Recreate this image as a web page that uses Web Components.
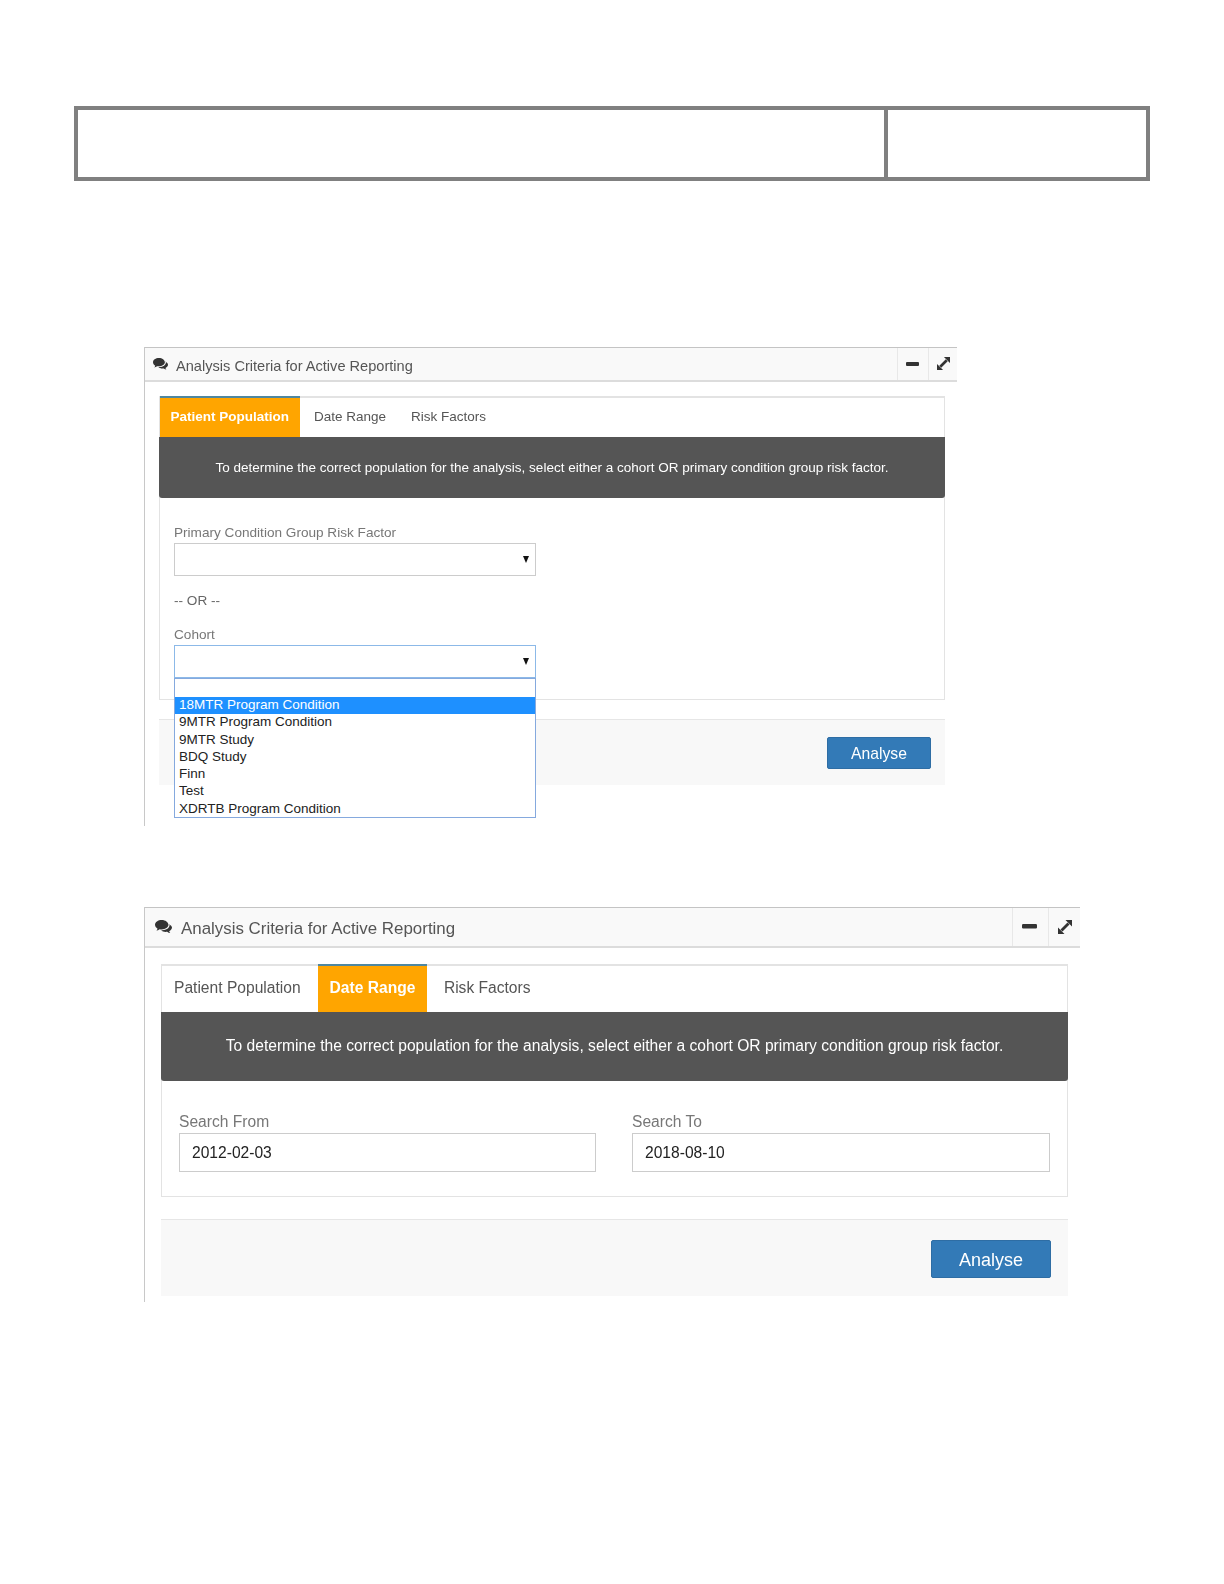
<!DOCTYPE html>
<html lang="en">
<head>
<meta charset="utf-8">
<title>Analysis Criteria</title>
<style>
    html, body { margin: 0; background: #fff; }
    body { font-family: "Liberation Sans", Arial, sans-serif; color: #333; }

    criteria-panel.small {
        --panel-width: 813px;
        --head-height: 35px;
        --head-font: 14.6px;
        --head-pad: 8px;
        --cell-a: 31px;
        --cell-b: 29px;
        --icon-w: 15px;
        --icon-gap: 8px;
        --dash-w: 13px;
        --arrows-w: 13px;
        --inner-top: 14px;
        --inner-left: 14px;
        --inner-width: 786px;
        --tab-height: 41px;
        --tab-font: 13.5px;
        --tab-pad-l: 12.5px;
        --tab-pad-r: 12.5px;
        --tab-active-pad: 10.5px;
        --tab-active-gap: 2px;
        --notice-height: 61px;
        --notice-pad: 0;
        --foot-gap: 19px;
        --foot-height: 66px;
        margin: 166px 0 0 144px;
        height: 479px;
    }
    criteria-panel.large {
        --panel-width: 936px;
        --head-height: 41px;
        --head-font: 16.900px;
        --head-pad: 10px;
        --cell-a: 36px;
        --cell-b: 32px;
        --icon-w: 17px;
        --icon-gap: 9px;
        --dash-w: 15px;
        --arrows-w: 14px;
        --inner-top: 16px;
        --inner-left: 16px;
        --inner-width: 907px;
        --tab-height: 48px;
        --tab-font: 15.600px;
        --tab-pad-l: 12px;
        --tab-pad-r: 17px;
        --tab-active-pad: 12px;
        --tab-active-gap: 4.5px;
        --notice-height: 69px;
        --notice-pad: 2px;
        --foot-gap: 22px;
        --foot-height: 77px;
        margin: 81px 0 0 144px;
        height: 395px;
    }
    .cols { display: grid; grid-template-columns: 417px 418px; column-gap: 36px; padding: 32px 17px 24px; }
    .rows { padding: 27px 14px 21px; }
    .or { font-size: 13.600px; line-height: 16px; color: #666; margin: 17px 0 18px; }
</style>
</head>
<body>

<blank-table></blank-table>

<criteria-panel class="small" heading="Analysis Criteria for Active Reporting">
    <tab-item slot="tabs" active>Patient Population</tab-item>
    <tab-item slot="tabs">Date Range</tab-item>
    <tab-item slot="tabs">Risk Factors</tab-item>
    <span slot="notice">To determine the correct population for the analysis, select either a cohort OR primary condition group risk factor.</span>
    <div class="rows" slot="body">
        <field-box label="Primary Condition Group Risk Factor"><select-box></select-box></field-box>
        <div class="or">-- OR --</div>
        <field-box label="Cohort">
            <select-box open>
                <drop-option selected>18MTR Program Condition</drop-option>
                <drop-option>9MTR Program Condition</drop-option>
                <drop-option>9MTR Study</drop-option>
                <drop-option>BDQ Study</drop-option>
                <drop-option>Finn</drop-option>
                <drop-option>Test</drop-option>
                <drop-option>XDRTB Program Condition</drop-option>
            </select-box>
        </field-box>
    </div>
    <action-button slot="action" style="--btn-w:104px;--btn-h:32px;--btn-font:15.700px;--btn-top:17px;--btn-right:14px">Analyse</action-button>
</criteria-panel>

<criteria-panel class="large" heading="Analysis Criteria for Active Reporting">
    <tab-item slot="tabs">Patient Population</tab-item>
    <tab-item slot="tabs" active>Date Range</tab-item>
    <tab-item slot="tabs">Risk Factors</tab-item>
    <span slot="notice">To determine the correct population for the analysis, select either a cohort OR primary condition group risk factor.</span>
    <div class="cols" slot="body">
        <field-box label="Search From" large><text-box value="2012-02-03"></text-box></field-box>
        <field-box label="Search To" large><text-box value="2018-08-10"></text-box></field-box>
    </div>
    <action-button slot="action" style="--btn-w:120px;--btn-h:38px;--btn-font:18px;--btn-top:20px;--btn-right:17px">Analyse</action-button>
</criteria-panel>

<script>
class BlankTable extends HTMLElement {
    constructor() {
        super();
        this.attachShadow({ mode: 'open' });
        this.shadowRoot.innerHTML = `
        <style>
            :host {
                display: grid;
                grid-template-columns: 806px 1fr;
                box-sizing: border-box;
                width: 1076px;
                height: 75px;
                margin: 106px 0 0 74px;
                border: 4px solid #808080;
            }
            div + div { border-left: 4px solid #808080; }
        </style>
        <div></div><div></div>
        `;
    }
}

class CriteriaPanel extends HTMLElement {
    constructor() {
        super();
        this.attachShadow({ mode: 'open' });
        this.shadowRoot.innerHTML = `
        <style>
            :host {
                display: block;
                box-sizing: border-box;
                width: var(--panel-width);
                border-left: 1px solid #c8c8c8;
                filter: blur(.3px);
            }
            header {
                display: flex;
                align-items: stretch;
                box-sizing: border-box;
                height: var(--head-height);
                background: #f9f9f9;
                border-top: 1px solid #c4c4c4;
                border-bottom: 2px solid #dcdcdc;
                font-size: var(--head-font);
                color: #555;
            }
            .title { flex: 1; display: flex; align-items: center; gap: var(--icon-gap); padding-left: var(--head-pad); }
            .title span { margin-top: 3px; }
            .title svg { width: var(--icon-w); flex: none; }
            .cell {
                display: flex;
                align-items: center;
                justify-content: center;
                border-left: 1px solid #e8e8e8;
                box-sizing: border-box;
            }
            .cell svg { margin-top: -1px; }
            .a { width: var(--cell-a); }
            .a svg { width: var(--dash-w); margin-right: 2px; }
            .b { width: var(--cell-b); }
            .b svg { width: var(--arrows-w); }
            .inner {
                width: var(--inner-width);
                margin: var(--inner-top) 0 0 var(--inner-left);
            }
            .box { border: 1px solid #e3e3e3; border-top-width: 2px; }
            nav { display: flex; height: calc(var(--tab-height) - 2px); }
            .notice {
                display: flex;
                align-items: center;
                justify-content: center;
                box-sizing: border-box;
                height: var(--notice-height);
                padding-bottom: var(--notice-pad);
                margin: 0 -1px;
                background: #555;
                border-radius: 0 0 3px 3px;
                color: #fff;
                font-size: var(--tab-font);
            }
            footer {
                display: flex;
                justify-content: flex-end;
                align-items: flex-start;
                box-sizing: border-box;
                height: var(--foot-height);
                margin-top: var(--foot-gap);
                background: #f8f8f8;
                border-top: 1px solid #e6e6e6;
            }
        </style>
        <header>
            <div class="title">
                <svg viewBox="0 0 24 20" fill="#333"><path d="M9.500 0C4.300 0 0 3 0 6.800c0 2.200 1.400 4.100 3.600 5.400-.3 1-.9 1.900-1.700 2.800 1.600-.2 3.300-.9 4.600-2 .9.200 1.900.3 3 .3 5.200 0 9.500-3 9.500-6.500S14.700 0 9.500 0z"/><path d="M20.300 5.700c.2.500.3 1 .3 1.500 0 4.300-4.600 7.300-10.200 7.300l-1.700-.1c1.400 1.500 3.700 2.400 6.300 2.400.8 0 1.500-.1 2.200-.2 1.200 1 2.700 1.700 4.400 1.900-.7-.8-1.300-1.700-1.600-2.700 2.400-1.200 4-3 4-5.100 0-2-1.700-3.700-4.500-4.500z"/></svg>
                <span id="heading"></span>
            </div>
            <div class="cell a"><svg viewBox="0 0 13 4"><rect width="13" height="4" rx="1" fill="#333"/></svg></div>
            <div class="cell b"><svg viewBox="0 0 14 14" fill="#333"><path d="M14 0v6.500L7.500 0zM0 14V7.500l6.500 6.500z"/><path d="M3.500 10.500l7-7" stroke="#333" stroke-width="2.800"/></svg></div>
        </header>
        <div class="inner">
            <div class="box">
                <nav><slot name="tabs"></slot></nav>
                <div class="notice"><slot name="notice"></slot></div>
                <slot name="body"></slot>
            </div>
            <footer><slot name="action"></slot></footer>
        </div>
        `;
    }

    connectedCallback() {
        this.shadowRoot.querySelector('#heading').textContent = this.getAttribute('heading');
    }
}

class TabItem extends HTMLElement {
    constructor() {
        super();
        this.attachShadow({ mode: 'open' });
        this.shadowRoot.innerHTML = `
        <style>
            :host {
                display: flex;
                align-items: center;
                box-sizing: border-box;
                padding: 0 var(--tab-pad-r) 2px var(--tab-pad-l);
                font-size: var(--tab-font);
                color: #555;
            }
            :host([active]) {
                margin: -2px var(--tab-active-gap) 0 0;
                padding: 0 var(--tab-active-pad) 3px;
                background: #ffa500;
                border-top: 2px solid #4f87a0;
                color: #fff;
                font-weight: bold;
            }
        </style>
        <slot></slot>
        `;
    }
}

class FieldBox extends HTMLElement {
    constructor() {
        super();
        this.attachShadow({ mode: 'open' });
        this.shadowRoot.innerHTML = `
        <style>
            :host { display: block; }
            label { display: block; font-size: 13.600px; line-height: 16px; margin-bottom: 2px; color: #777; }
            :host([large]) label { font-size: 15.600px; line-height: 18px; }
        </style>
        <label></label>
        <slot></slot>
        `;
    }

    connectedCallback() {
        this.shadowRoot.querySelector('label').textContent = this.getAttribute('label');
    }
}

class SelectBox extends HTMLElement {
    constructor() {
        super();
        this.attachShadow({ mode: 'open' });
        this.shadowRoot.innerHTML = `
        <style>
            :host {
                display: block;
                position: relative;
                box-sizing: border-box;
                height: 33px;
                width: 362px;
                border: 1px solid #ccc;
                background: #fff;
            }
            :host([open]) { border-color: #8cb9e8; }
            svg { position: absolute; right: 6px; top: 12px; width: 6px; height: 7px; }
            .list { display: none; }
            :host([open]) .list {
                display: block;
                position: absolute;
                left: -1px;
                right: -1px;
                top: 32px;
                box-sizing: border-box;
                height: 140px;
                padding-top: 18px;
                background: #fff;
                border: 1px solid #85a9de;
            }
        </style>
        <svg viewBox="0 0 6 7"><path d="M0 0h6L3 7z" fill="#111"/></svg>
        <div class="list"><slot></slot></div>
        `;
    }
}

class DropOption extends HTMLElement {
    constructor() {
        super();
        this.attachShadow({ mode: 'open' });
        this.shadowRoot.innerHTML = `
        <style>
            :host {
                display: block;
                height: 17.300px;
                line-height: 15px;
                padding-left: 4px;
                font-size: 13.500px;
                color: #222;
            }
            :host([selected]) { background: #1e90ff; color: #fff; }
        </style>
        <slot></slot>
        `;
    }
}

class TextBox extends HTMLElement {
    constructor() {
        super();
        this.attachShadow({ mode: 'open' });
        this.shadowRoot.innerHTML = `
        <style>
            :host {
                display: flex;
                align-items: center;
                box-sizing: border-box;
                height: 39px;
                padding-left: 12px;
                border: 1px solid #ccc;
                font-size: 15.600px;
                color: #222;
            }
        </style>
        <span></span>
        `;
    }

    connectedCallback() {
        this.shadowRoot.querySelector('span').textContent = this.getAttribute('value');
    }
}

class ActionButton extends HTMLElement {
    constructor() {
        super();
        this.attachShadow({ mode: 'open' });
        this.shadowRoot.innerHTML = `
        <style>
            :host {
                display: flex;
                align-items: center;
                justify-content: center;
                box-sizing: border-box;
                width: var(--btn-w);
                height: var(--btn-h);
                margin: var(--btn-top) var(--btn-right) 0 0;
                padding-top: 2px;
                background: #337ab7;
                border: 1px solid #2e6da4;
                border-radius: 2px;
                color: #fff;
                font-size: var(--btn-font);
            }
        </style>
        <slot></slot>
        `;
    }
}

customElements.define('blank-table', BlankTable);
customElements.define('criteria-panel', CriteriaPanel);
customElements.define('tab-item', TabItem);
customElements.define('field-box', FieldBox);
customElements.define('select-box', SelectBox);
customElements.define('drop-option', DropOption);
customElements.define('text-box', TextBox);
customElements.define('action-button', ActionButton);
</script>
</body>
</html>
